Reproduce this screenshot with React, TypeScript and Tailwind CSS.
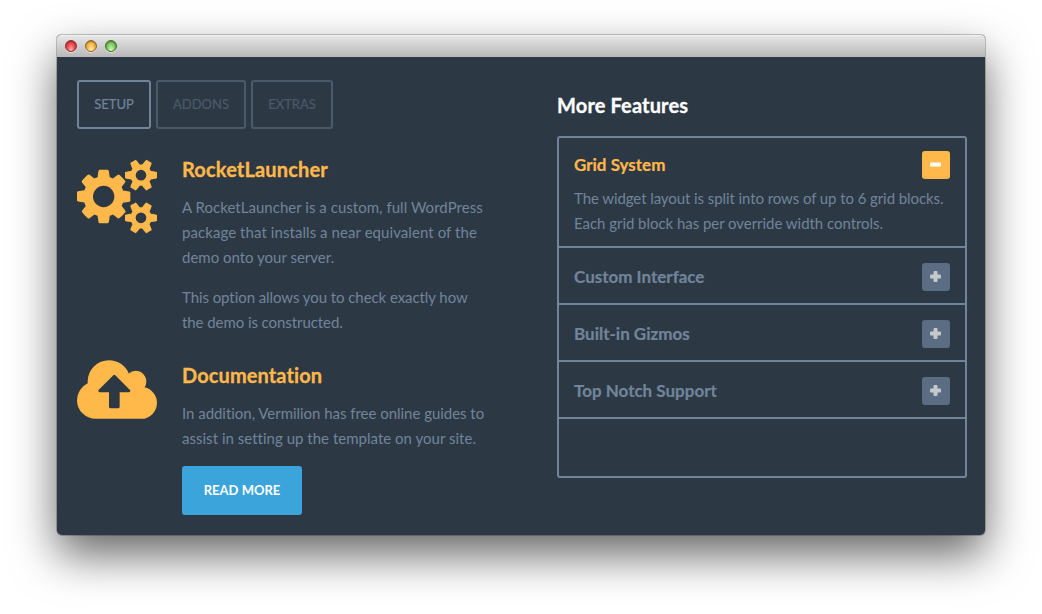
import React from "react";

const smallGear =
  "v140q0 16-149 31-12 27-30 52 51 113 51 138 0 4-4 7-122 71-124 71-8 0-46-47t-52-68q-20 2-30 2t-30-2q-14 21-52 68t-46 47q-2 0-124-71-4-3-4-7 0-25 51-138-18-25-30-52-149-15-149-31v-140q0-16 149-31 13-29 30-52-51-113-51-138 0-4 4-7 4-2 35-20t59-34 30-16q8 0 46 46.5t52 67.5q20-2 30-2t30 2q51-71 92-112l6-2q4 0 124 70 4 3 4 7 0 25-51 138 17 23 30 52 149 15 149 31z";

function CogsIcon() {
  return (
    <svg viewBox="0 0 1920 1792" className="mt-px mr-px h-[75px] w-20 shrink-0 overflow-visible fill-[#ffb84a]">
      <path
        d={
          "M896 896q0-106-75-181t-181-75-181 75-75 181 75 181 181 75 181-75 75-181zm768 512q0-52-38-90t-90-38-90 38-38 90q0 53 37.5 90.5t90.5 37.5 90.5-37.5 37.5-90.5zm0-1024q0-52-38-90t-90-38-90 38-38 90q0 53 37.5 90.5t90.5 37.5 90.5-37.5 37.5-90.5zm-384 421v185q0 10-7 19.5t-16 10.5l-155 24q-11 35-32 76 34 48 90 115 7 11 7 20 0 12-7 19-23 30-82.5 89.5t-78.5 59.5q-11 0-21-7l-115-90q-37 19-77 31-11 108-23 155-7 24-30 24h-186q-11 0-20-7.5t-10-17.5l-23-153q-34-10-75-31l-118 89q-7 7-20 7-11 0-21-8-144-133-144-160 0-9 7-19 10-14 41-53t47-61q-23-44-35-82l-152-24q-10-1-17-9.5t-7-19.5v-185q0-10 7-19.5t16-10.5l155-24q11-35 32-76-34-48-90-115-7-11-7-20 0-12 7-20 22-30 82-89t79-59q11 0 21 7l115 90q34-18 77-32 11-108 23-154 7-24 30-24h186q11 0 20 7.5t10 17.5l23 153q34 10 75 31l118-89q8-7 20-7 11 0 21 8 144 133 144 160 0 8-7 19-12 16-42 54t-45 60q23 48 34 82l152 23q10 2 17 10.5t7 19.5zm640 533" +
          smallGear +
          "m0-1024" +
          smallGear
        }
      />
    </svg>
  );
}

function CloudUploadIcon() {
  return (
    <svg viewBox="0 128 1920 1408" className="mr-px h-[59px] w-20 shrink-0 fill-[#ffb84a]">
      <path d="M1280 864q0-14-9-23l-352-352q-9-9-23-9t-23 9l-351 351q-10 12-10 24 0 14 9 23t23 9h224v352q0 13 9.500 22.500t22.500 9.500h192q13 0 22.500-9.500t9.500-22.500v-352h224q13 0 22.500-9.500t9.500-22.500zm640 288q0 159-112.500 271.500t-271.500 112.500h-1088q-185 0-316.500-131.500t-131.500-316.500q0-130 70-240t188-165q-2-30-2-43 0-212 150-362t362-150q156 0 285.500 87t188.500 231q71-62 166-62 106 0 181 75t75 181q0 76-41 138 130 31 213.500 135.500t83.500 238.500z" />
    </svg>
  );
}

function Tab({ label, className }: { label: string; className: string }) {
  return (
    <button
      className={`h-[49px] rounded-[3px] border-2 text-center text-[13px] leading-[45px] [-webkit-text-stroke:0.2px] ${className}`}
    >
      {label}
    </button>
  );
}

function Toggle({ open = false }: { open?: boolean }) {
  return (
    <span
      className={`flex size-7 shrink-0 justify-center rounded-[3px] pt-2 pr-px ${open ? "bg-[#ffb84a]" : "bg-[#5b6d82]"}`}
    >
      <svg viewBox="0 0 11 11" className={`size-[11px] ${open ? "fill-white" : "fill-[#c5c9ce]"}`}>
        <rect x="0" y="3.5" width="11" height="4" rx="0.9" />
        {!open && <rect x="3.5" y="0" width="4" height="11" rx="0.9" />}
      </svg>
    </span>
  );
}

function ClosedRow({ title }: { title: string }) {
  return (
    <div className="flex h-[57px] items-center justify-between border-b-2 border-[#71849a] px-[15px] pt-[2px]">
      <h3 className="text-[17px] leading-6 font-bold text-[#71849a] [-webkit-text-stroke:0.2px]">{title}</h3>
      <Toggle />
    </div>
  );
}

export default function App() {
  return (
    <div className="h-[614px] w-[1042px] overflow-hidden bg-white pt-[35px] pl-[57px] font-[Lato,sans-serif] text-[15px] leading-[25px] text-[#71849a] [font-variant-ligatures:none]">
      <div className="flex h-[500px] w-[928px] flex-col overflow-hidden rounded-t-[4px] rounded-b-[5px] bg-[#2d3845] shadow-[0_0_0_1px_rgba(0,0,0,0.22),0_20px_45px_rgba(0,0,0,0.6)]">
        <div className="flex h-[22px] shrink-0 items-center gap-2 border-t border-[#f2f2f2] bg-linear-to-b from-[#e6e6e6] to-[#b8b8b8] pb-px pl-2">
          <span className="size-3 rounded-full border border-[#8c3137] bg-[radial-gradient(ellipse_at_50%_90%,#ffb5b5_0%,#f04a50_50%,#d0343b_100%)] shadow-[inset_0_1px_1px_rgba(90,0,0,0.5),0_1px_0_rgba(255,255,255,0.5)]" />
          <span className="size-3 rounded-full border border-[#966528] bg-[radial-gradient(ellipse_at_50%_90%,#fff0a8_0%,#f5bb50_50%,#dc9635_100%)] shadow-[inset_0_1px_1px_rgba(90,50,0,0.5),0_1px_0_rgba(255,255,255,0.5)]" />
          <span className="size-3 rounded-full border border-[#44702f] bg-[radial-gradient(ellipse_at_50%_90%,#d5ffb5_0%,#86cb6b_50%,#5ca247_100%)] shadow-[inset_0_1px_1px_rgba(20,70,0,0.5),0_1px_0_rgba(255,255,255,0.5)]" />
        </div>
        <div className="flex flex-1 pl-5">
          <div className="w-[480px] pt-[23px]">
            <div className="flex gap-[5px]">
              <Tab label="SETUP" className="w-[74px] border-[#71849a] text-[#71849a]" />
              <Tab label="ADDONS" className="w-[90px] border-[#4b5a69] text-[#4b5a69]" />
              <Tab label="EXTRAS" className="w-[82px] border-[#4b5a69] text-[#4b5a69]" />
            </div>
            <section className="mt-[29px] flex h-[202px] gap-6">
              <CogsIcon />
              <div>
                <h2 className="-mt-px text-[20px] leading-6 font-bold tracking-[0.16px] text-[#ffb84a] [-webkit-text-stroke:0.3px]">
                  RocketLauncher
                </h2>
                <p className="mt-[14px]">
                  <span className="tracking-[0.03px]">A RocketLauncher is a custom, full WordPress</span>
                  <br />
                  <span className="tracking-[0.07px]">package that installs a near equivalent of the</span>
                  <br />
                  demo onto your server.
                </p>
                <p className="mt-[15px] tracking-[-0.07px]">
                  This option allows you to check exactly how
                  <br />
                  the demo is constructed.
                </p>
              </div>
            </section>
            <section className="flex gap-6">
              <CloudUploadIcon />
              <div className="pt-[3px]">
                <h2 className="text-[20px] leading-6 font-bold tracking-[0.1px] text-[#ffb84a] [-webkit-text-stroke:0.3px]">
                  Documentation
                </h2>
                <p className="mt-[14px]">
                  <span className="tracking-[-0.03px]">In addition, Vermilion has free online guides to</span>
                  <br />
                  <span className="tracking-[0.02px]">assist in setting up the template on your site.</span>
                </p>
                <button className="mt-[15px] block h-[49px] w-[120px] rounded-[3px] bg-[#3ba4da] text-[13px] font-bold text-white">
                  READ MORE
                </button>
              </div>
            </section>
          </div>
          <div className="w-[410px] pt-[36px]">
            <h2 className="text-[20px] leading-6 font-bold tracking-[0.15px] text-white [-webkit-text-stroke:0.3px]">
              More Features
            </h2>
            <div className="mt-[19px] h-[342px] rounded-[3px] border-2 border-[#71849a]">
              <div className="h-[110px] border-b-2 border-[#71849a] px-[15px] pt-[13px]">
                <div className="flex items-center justify-between">
                  <h3 className="text-[17px] leading-6 font-bold text-[#ffb84a] [-webkit-text-stroke:0.2px]">
                    Grid System
                  </h3>
                  <Toggle open />
                </div>
                <p className="mt-[7px] whitespace-nowrap">
                  <span className="tracking-[-0.08px]">The widget layout is split into rows of up to 6 grid blocks.</span>
                  <br />
                  <span className="tracking-[-0.04px]">Each grid block has per override width controls.</span>
                </p>
              </div>
              <ClosedRow title="Custom Interface" />
              <ClosedRow title="Built-in Gizmos" />
              <ClosedRow title="Top Notch Support" />
            </div>
          </div>
        </div>
      </div>
    </div>
  );
}
